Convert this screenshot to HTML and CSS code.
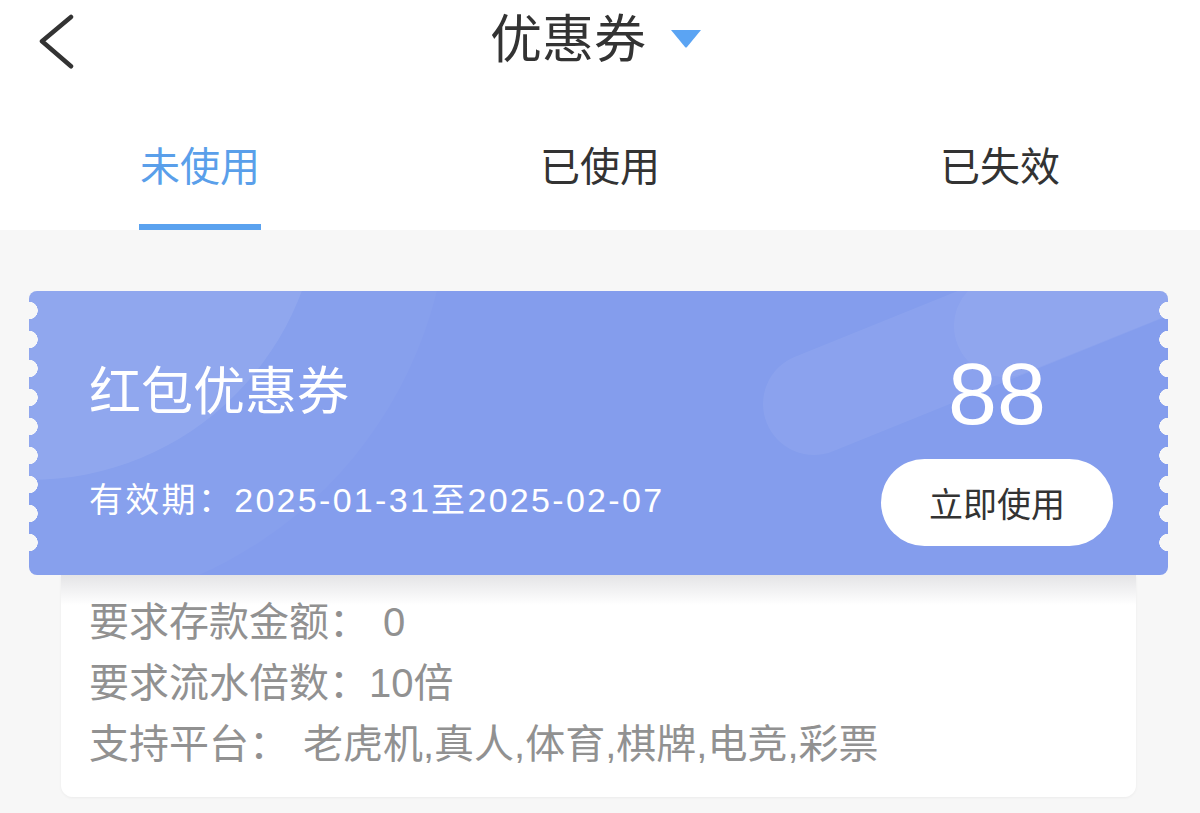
FILE: index.html
```html
<!DOCTYPE html>
<html lang="zh-CN">
  <head>
    <meta charset="UTF-8" />
    <meta name="viewport" content="width=device-width, initial-scale=1.0" />
    <title>优惠券</title>
    <link rel="stylesheet" href="styles.css">
  </head>
  <body>
    <header class="topbar">
      <a class="back" href="#">
        <svg width="40" height="60" viewBox="0 0 40 60">
          <path d="M32 4 L3 28.3 L32 53.3" fill="none" stroke="#333" stroke-width="4.5" stroke-linecap="round" stroke-linejoin="round" />
        </svg>
      </a>
      <h1 class="title">
        优惠券
        <svg class="caret" width="32" height="20" viewBox="0 0 32 20">
          <path d="M1 1 H31 L17 18 Q16 19 15 18 Z" fill="#5ba4f3" />
        </svg>
      </h1>
    </header>

    <nav class="tabs">
      <div class="tab active">未使用</div>
      <div class="tab">已使用</div>
      <div class="tab">已失效</div>
    </nav>

    <main class="list">
      <div class="coupon-item">
        <div class="coupon">
          <div class="coupon-deco">
            <span class="circle circle-outer"></span>
            <span class="circle"></span>
            <span class="band"></span>
            <span class="band band-2"></span>
          </div>
          <div class="coupon-info">
            <div class="coupon-name">红包优惠券</div>
            <div class="coupon-date">有效期：2025-01-31至2025-02-07</div>
          </div>
          <div class="coupon-side">
            <div class="coupon-amount">88</div>
            <button class="use-btn">立即使用</button>
          </div>
        </div>
        <div class="coupon-detail">
          <p>要求存款金额：<span class="val wide">0</span></p>
          <p>要求流水倍数：<span class="val">10倍</span></p>
          <p>支持平台：<span class="val wide">老虎机,真人,体育,棋牌,电竞,彩票</span></p>
        </div>
      </div>
    </main>
  </body>
</html>
```

FILE: styles.css
```css
body {
  margin: 0;
  font-family: "Liberation Sans", "Noto Sans CJK SC", sans-serif;
  background-color: #f7f7f7;
  color: #333;
  min-height: 813px;
}
.topbar {
  background-color: #fff;
  height: 84px;
  display: grid;
  grid-template-columns: 1fr auto 1fr;
  align-items: center;
}
.back {
  display: flex;
  padding-left: 39px;
  padding-top: 2px;
}
.title {
  margin: 0;
  font-size: 52px;
  font-weight: normal;
  line-height: 84px;
  color: #333;
  display: flex;
  align-items: center;
  gap: 24px;
  padding-right: 8px;
  margin-top: -5px;
}
.caret {
  margin-top: -2px;
}
.tabs {
  background-color: #fff;
  height: 146px;
  display: flex;
}
.tab {
  flex: 1;
  display: flex;
  justify-content: center;
  align-items: flex-start;
  padding-top: 58px;
  font-size: 40px;
  line-height: 50px;
  color: #333;
  position: relative;
}
.tab.active {
  color: #5a9fea;
}
.tab.active::after {
  content: "";
  position: absolute;
  bottom: 0;
  left: 139px;
  width: 122px;
  height: 6px;
  background-color: #5aa2ef;
}
.list {
  padding: 61px 32px 13px 29px;
}
.coupon {
  position: relative;
  height: 284px;
  border-radius: 8px;
  background-color: #849ded;
  overflow: hidden;
  display: flex;
  justify-content: space-between;
  padding: 0 55px 0 60px;
  color: #fff;
}
.coupon::before,
.coupon::after {
  content: "";
  position: absolute;
  top: 5px;
  height: 261px;
  width: 18px;
  background: radial-gradient(circle, #f7f7f7 8.5px, transparent 9px) 0 0 / 18px 29px repeat-y;
}
.coupon::before {
  left: -9px;
}
.coupon::after {
  right: -9px;
}
.coupon-deco {
  position: absolute;
  inset: 0;
  overflow: hidden;
}
.circle {
  position: absolute;
  left: -289px;
  top: -391px;
  width: 580px;
  height: 580px;
  border-radius: 50%;
  background-color: rgba(255, 255, 255, 0.08);
}
.circle-outer {
  left: -420px;
  top: -520px;
  width: 840px;
  height: 840px;
  background-color: rgba(255, 255, 255, 0.03);
}
.band {
  position: absolute;
  left: 734px;
  top: 62px;
  width: 640px;
  height: 102px;
  border-radius: 51px;
  background-color: rgba(255, 255, 255, 0.06);
  transform: rotate(-22deg);
  transform-origin: 51px 51px;
}
.band-2 {
  left: 925px;
  top: -16px;
  background-color: rgba(255, 255, 255, 0.05);
}
.coupon-info {
  position: relative;
  display: flex;
  flex-direction: column;
  padding-top: 71px;
}
.coupon-name {
  font-size: 52px;
  line-height: 60px;
}
.coupon-date {
  margin-top: 58px;
  font-size: 34px;
  line-height: 40px;
  letter-spacing: 2.3px;
}
.coupon-side {
  position: relative;
  display: flex;
  flex-direction: column;
  align-items: center;
  padding-top: 58px;
}
.coupon-amount {
  font-size: 88px;
  line-height: 90px;
}
.use-btn {
  margin-top: 20px;
  width: 232px;
  height: 87px;
  border: none;
  border-radius: 44px;
  background-color: #fff;
  color: #333;
  font-family: inherit;
  font-size: 34px;
  cursor: pointer;
}
.coupon-detail {
  margin: 0 32px;
  padding: 17px 28px 22px;
  background: linear-gradient(to bottom, #e4e4e6, #fff 30px);
  border-radius: 0 0 12px 12px;
  box-shadow: 0 1px 3px rgba(0, 0, 0, 0.05);
}
.coupon-detail p {
  margin: 0;
  font-size: 40px;
  line-height: 61px;
  color: #919191;
}
.val.wide {
  margin-left: 14px;
}
```
